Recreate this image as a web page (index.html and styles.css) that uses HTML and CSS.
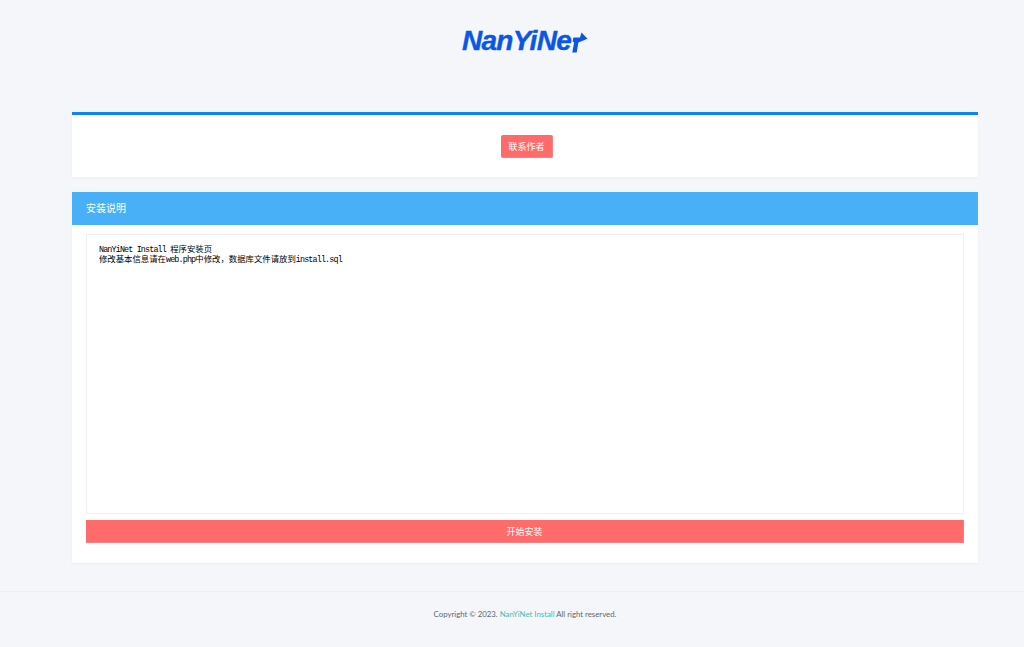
FILE: index.html
```html
<!DOCTYPE html>
<html lang="zh-CN">
<head>
  <meta charset="UTF-8" />
  <meta name="viewport" content="width=device-width, initial-scale=1.0" />
  <title>NanYiNet Install</title>
  <link rel="stylesheet" href="styles.css">
</head>
<body>
  <header class="logo-bar">
    <a class="logo" href="#">
      <span class="logo-text">NanYiNe</span>
      <svg class="logo-arrow" width="16" height="21" viewBox="0 0 16 21">
        <path d="M1.3 5.5 L8 5.5 L9.5 0.5 L15.5 6.8 L6.4 10.5 L4.7 20.5 L0.3 20.5 L2.1 10.5 L0.7 9.5 Z" fill="#0b57e3" />
      </svg>
    </a>
  </header>

  <main class="container">
    <section class="card card-top">
      <a class="btn btn-small" href="#">联系作者</a>
    </section>

    <section class="card">
      <div class="card-header">安装说明</div>
      <div class="card-body">
        <div class="notes">
          <div><span class="latin">NanYiNet Install </span>程序安装页</div>
          <div>修改基本信息请在<span class="latin">web.php</span>中修改，数据库文件请放到<span class="latin">install.sql</span></div>
        </div>
        <a class="btn btn-block" href="#">开始安装</a>
      </div>
    </section>
  </main>

  <footer class="footer">
    Copyright © 2023. <a href="#">NanYiNet Install</a> All right reserved.
  </footer>
</body>
</html>
```

FILE: styles.css
```css
* {
  box-sizing: border-box;
}

body {
  margin: 0;
  background: #f4f6fa;
  font-family: "Noto Sans", "Noto Sans CJK SC", sans-serif;
  color: #5f6670;
}

a {
  text-decoration: none;
}

.logo-bar {
  height: 112px;
  padding: 26px 0 0 26px;
  display: flex;
  justify-content: center;
}

.logo {
  display: flex;
  align-items: flex-start;
  height: 30px;
}

.logo-text {
  font-family: "Liberation Sans", sans-serif;
  font-size: 28px;
  font-weight: 700;
  font-style: italic;
  line-height: 30px;
  letter-spacing: -0.7px;
  color: #0b57e3;
  -webkit-text-stroke: 0.4px #0b57e3;
}

.logo-arrow {
  margin: 6px 0 0 1px;
}

.container {
  width: 906px;
  margin-left: 72px;
}

.card {
  background: #fff;
  margin-bottom: 15px;
  box-shadow: 0 1px 2px rgba(0, 0, 0, 0.04);
}

.card-top {
  height: 65px;
  border-top: 3px solid #0d84f5;
  padding-top: 20px;
  display: flex;
  justify-content: center;
}

.btn {
  display: block;
  background: #ff6b6b;
  border: 1px solid #ff7c7c;
  border-width: 0 1px 1px 0;
  color: #fff;
  text-align: center;
  font-size: 9px;
  font-family: "Noto Sans CJK SC", sans-serif;
}

.btn-small {
  width: 52px;
  height: 23px;
  line-height: 23px;
  margin-left: 4px;
  border-radius: 2px;
}

.card-header {
  height: 33px;
  line-height: 33px;
  padding-left: 14px;
  background: #48b0f7;
  color: #fff;
  font-size: 10px;
}

.card-body {
  padding: 9px 14px 20px;
}

.notes {
  height: 280px;
  padding: 9px 12px;
  border: 1px solid #f0f0f2;
  font-family: "Noto Sans CJK SC", sans-serif;
  font-size: 8.4px;
  line-height: 9px;
  color: #000;
}

.latin {
  font-family: "Liberation Mono", monospace;
  letter-spacing: -0.84px;
  line-height: 1;
}

.btn-block {
  height: 23px;
  line-height: 23px;
  margin-top: 6px;
}

.footer {
  margin-top: 28px;
  height: 55px;
  padding: 15px 0 0 26px;
  border-top: 1px solid #eceef2;
  text-align: center;
  font-family: "Lato", "Noto Sans", sans-serif;
  font-size: 7.8px;
  line-height: 14px;
}

.footer a {
  color: #3dbfb4;
}
```
